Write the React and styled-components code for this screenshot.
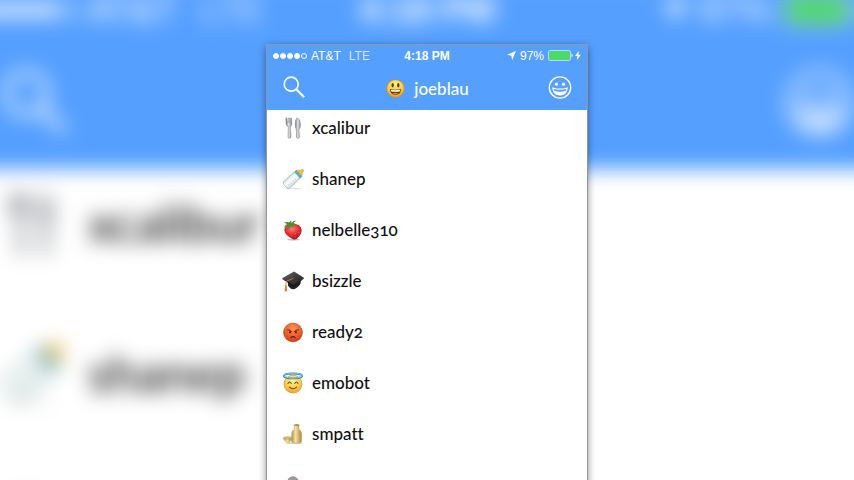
import React, { useId } from "react";
import styled, { createGlobalStyle, ThemeProvider } from "styled-components";

const GlobalStyle = createGlobalStyle`
  * { box-sizing: border-box; }
  body { margin: 0; background: #fff; }
`;

const phoneSizes = {
  screen: 320, status: 21, statusPad: 6, statusText: 12, statusGap: 4, carrierGap: 8,
  dot: 6, dotGap: 1, dotLine: 1, battery: 25, batteryHeight: 11, glyph: 9, bolt: 6, boltGap: 2,
  nav: 44, navPad: 15, navIcon: 24, title: 17, titleGap: 8, titleIcon: 21,
  listTop: 6, row: 23, rowGap: 28, rowPad: 15, icon: 22, iconGap: 8, name: 17,
};

const backdropSizes = {
  screen: 944, status: 59, statusPad: 18, statusText: 36, statusGap: 12, carrierGap: 24,
  dot: 18, dotGap: 3, dotLine: 3, battery: 74, batteryHeight: 32, glyph: 27, bolt: 18, boltGap: 6,
  nav: 130, navPad: 44, navIcon: 71, title: 50, titleGap: 24, titleIcon: 62,
  listTop: 20, row: 68, rowGap: 82, rowPad: 44, icon: 65, iconGap: 24, name: 50,
};

const s = (key) => ({ theme }) => `${theme[key]}px`;

const Stage = styled.main`
  position: relative;
  height: 100vh;
  overflow: hidden;
  padding-top: 45px;
  font-family: "Lato", "Open Sans", sans-serif;
`;

const Backdrop = styled.div`
  position: absolute;
  inset: 0;
  display: flex;
  justify-content: center;
  background: linear-gradient(#559fff 168px, #fff 168px);
  filter: blur(10px);
`;

const BackdropScreen = styled.div`
  flex: none;
  width: ${s("screen")};
  margin-top: -20px;
`;

const Phone = styled.section`
  position: relative;
  width: min(100%, ${s("screen")});
  margin: 0 auto;
  box-shadow: 0 0 0 1px #8e989f, 0 2px 8px rgba(0, 0, 0, 0.55);
`;

const Header = styled.header`
  background: #559fff;
  color: #fff;
`;

const StatusBar = styled.div`
  display: grid;
  grid-template-columns: 1fr auto 1fr;
  align-items: center;
  height: ${s("status")};
  padding: 0 ${s("statusPad")};
  font: ${s("statusText")} / 1 "Liberation Sans", Arial, sans-serif;
  white-space: nowrap;
`;

const StatusGroup = styled.div`
  display: flex;
  align-items: center;
  gap: ${s("statusGap")};
  justify-content: ${({ $end }) => ($end ? "flex-end" : "flex-start")};
`;

const Dots = styled.div`
  display: flex;
  gap: ${s("dotGap")};
`;

const Dot = styled.span`
  width: ${s("dot")};
  height: ${s("dot")};
  border: ${s("dotLine")} solid #fff;
  border-radius: 50%;
  background: ${({ $on }) => ($on ? "#fff" : "transparent")};
`;

const Network = styled.span`
  margin-left: ${({ theme }) => theme.carrierGap - theme.statusGap}px;
  opacity: 0.75;
`;

const Clock = styled.time`
  font-weight: 700;
`;

const StatusGlyph = styled.svg`
  flex: none;
  width: ${({ theme, $size }) => theme[$size]}px;
  height: ${({ theme, $tall }) => theme[$tall]}px;
`;

const PowerGroup = styled.div`
  display: flex;
  align-items: center;
  gap: ${s("boltGap")};
`;

const NavBar = styled.nav`
  display: flex;
  align-items: center;
  justify-content: space-between;
  height: ${s("nav")};
  padding: 0 ${s("navPad")};
`;

const IconButton = styled.button`
  display: block;
  padding: 0;
  border: 0;
  background: none;
  color: inherit;
  cursor: pointer;
  svg { display: block; width: ${s("navIcon")}; height: ${s("navIcon")}; }
`;

const Emoji = styled.svg`
  display: block;
  flex: none;
  width: ${s("icon")};
  height: ${s("icon")};
`;

const Title = styled.h1`
  display: flex;
  align-items: center;
  gap: ${s("titleGap")};
  margin: 0;
  font-size: ${s("title")};
  line-height: ${s("row")};
  font-weight: 500;
  ${Emoji} { width: ${s("titleIcon")}; height: ${s("titleIcon")}; }
`;

const FriendList = styled.ul`
  display: flex;
  flex-direction: column;
  gap: ${s("rowGap")};
  margin: 0;
  padding: ${s("listTop")} 0 0;
  list-style: none;
  background: #fff;
`;

const FriendButton = styled.button`
  display: flex;
  align-items: center;
  gap: ${s("iconGap")};
  width: 100%;
  height: ${s("row")};
  padding: 0 ${s("rowPad")};
  border: 0;
  background: none;
  color: #111;
  font: 500 ${s("name")} / 1 "Lato", "Open Sans", sans-serif;
  font-variant-numeric: oldstyle-nums;
  font-variant-ligatures: none;
  text-align: left;
  cursor: pointer;
`;

function Ball({ id, from, mid, to, edge, cy = 12, r = 10 }) {
  return (
    <>
      <radialGradient id={id} cx="50%" cy="28%" r="75%">
        <stop offset="0" stopColor={from} />
        <stop offset="0.55" stopColor={mid} />
        <stop offset="1" stopColor={to} />
      </radialGradient>
      <circle cx="12" cy={cy} r={r} fill={`url(#${id})`} stroke={edge} strokeWidth="0.7" />
    </>
  );
}

function Smiley() {
  const id = useId();
  return (
    <Emoji viewBox="0 0 24 24" aria-hidden="true">
      <Ball id={id} from="#fff07a" mid="#fbd03c" to="#ec9a1c" edge="#d48a22" />
      <ellipse cx="8.8" cy="8.3" rx="1.3" ry="2.5" fill="#57401e" />
      <ellipse cx="15.2" cy="8.3" rx="1.3" ry="2.5" fill="#57401e" />
      <path d="M5.6 12.5q6.4 1.6 12.8 0q-.5 6.7-6.4 6.7t-6.4-6.7z" fill="#6b3d12" />
      <path d="M6.6 13.5q5.4 1.1 10.8 0l-.5 1.9q-4.9.9-9.8 0z" fill="#fff" />
      <path d="M8.5 17.5q3.5-1.4 7 0q-3.5 2.2-7 0z" fill="#e08948" />
    </Emoji>
  );
}

function Cutlery() {
  const id = useId();
  return (
    <Emoji viewBox="0 0 24 24" aria-hidden="true">
      <linearGradient id={id}>
        <stop offset="0" stopColor="#777b81" />
        <stop offset="0.5" stopColor="#e5e7ea" />
        <stop offset="1" stopColor="#81858c" />
      </linearGradient>
      <g fill={`url(#${id})`} stroke="#7d8188" strokeWidth="0.6">
        <path d="M4.200 1.200q.6-.5 1 0l.5 5.200h.8l.2-5.200q.7-.5 1.300 0l.2 5.200h.8l.3-5.200q.6-.4 1.100 0l.2 6.400q0 2.100-1.600 2.900l.8 11q0 1.700-1.600 1.700t-1.600-1.700l.3-11Q4.600 9.700 4.500 7.600z" />
        <path d="M16.500 1q3.600 1.200 3.600 8l-.5 3.200-1.200.7.600 8.700q0 1.600-1.600 1.600t-1.600-1.600l.2-8.800-1.200-.6Q13.800 2.500 16.500 1z" />
      </g>
    </Emoji>
  );
}

function Bottle() {
  const id = useId();
  return (
    <Emoji viewBox="0 0 24 24" aria-hidden="true">
      <linearGradient id={id} x1="0" y1="0" x2="1" y2="0">
        <stop offset="0" stopColor="#d3e2e3" />
        <stop offset="0.4" stopColor="#fdfffe" />
        <stop offset="1" stopColor="#d2e1e1" />
      </linearGradient>
      <ellipse cx="12" cy="22.500" rx="8.500" ry="0.800" fill="#e2e2e2" />
      <g transform="rotate(48 12 12)">
        <rect x="7.200" y="5" width="9.600" height="18.500" rx="3" fill={`url(#${id})`} stroke="#94aaac" strokeWidth="0.7" />
        <path d="M15 10.500h-2m2 3h-2m2 3h-2m2 3h-2" stroke="#b4c4c5" strokeWidth="0.6" />
        <rect x="7.200" y="2.600" width="9.600" height="3" rx="1.200" fill="#53b2cf" stroke="#3b90aa" strokeWidth="0.5" />
        <path d="M8.200 2.600q.2-2.200 2.300-2.600V-2.300q1.500-1.500 3 0V0q2.100.4 2.300 2.600z" fill="#f7bd3b" stroke="#d39429" strokeWidth="0.5" />
      </g>
    </Emoji>
  );
}

function Strawberry() {
  const id = useId();
  return (
    <Emoji viewBox="0 0 24 24" aria-hidden="true">
      <radialGradient id={id} cx="45%" cy="30%" r="75%">
        <stop offset="0" stopColor="#ff7d6a" />
        <stop offset="0.5" stopColor="#e52f31" />
        <stop offset="1" stopColor="#a50d1c" />
      </radialGradient>
      <ellipse cx="12.500" cy="22.500" rx="7" ry="0.900" fill="#c4bebe" />
      <path d="M4 8.500q3.500-3.500 8-2 5.500-2.300 8.500 2.500 2.300 5-1.700 9.800-3 4.500-6.800 3.200Q3.200 18 2.500 12q0-2 1.500-3.500z" fill={`url(#${id})`} />
      <path d="M10.500 7.500q-2 1-3.500 3.500-.5-2-.2-3.300Q4.500 7.800 2.200 9.800 2.800 6.500 5.600 5.500 4 4.300 2 4.300q3-1.800 5.800-.5Q8.300 2.300 10 1.500q-.2 1.500.4 2.800Q12.700 1.500 15.500 2q-2.300 1.300-2.900 2.700 2.500.2 3.800 2.300-2.600-.7-4.600-.3.500 2-.4 4-.2-1.800-.9-3.200z" fill="#4c8f2d" />
      <g fill="#f8a36b">
        <circle cx="6.500" cy="14" r="0.500" /><circle cx="12" cy="13" r="0.500" />
        <circle cx="17" cy="10.500" r="0.500" /><circle cx="18.500" cy="14.500" r="0.500" />
        <circle cx="14.500" cy="16" r="0.500" /><circle cx="10" cy="17.500" r="0.500" />
        <circle cx="15" cy="19.500" r="0.500" />
      </g>
    </Emoji>
  );
}

function GraduationCap() {
  const id = useId();
  return (
    <Emoji viewBox="0 0 24 24" aria-hidden="true">
      <linearGradient id={id} x1="0" y1="0" x2="1" y2="1">
        <stop offset="0" stopColor="#666" />
        <stop offset="0.5" stopColor="#3d3d3d" />
        <stop offset="1" stopColor="#161616" />
      </linearGradient>
      <path d="M6.500 10v7q2.600 4.500 6.500 4 5.300-2 7.300-6.500V8.500z" fill="#222" />
      <path d="M.5 8.800 13.200 1.500 23.800 8.400 13 18z" fill={`url(#${id})`} />
      <path d="M.5 8.800 13 17l10.800-8.600v.8L13 18.500.5 9.700z" fill="#111" />
      <path d="M12.500 9 5 12.200l-1 5.500" fill="none" stroke="#d08a35" strokeWidth="0.9" />
      <path d="M3.400 16.500h1.700l.7 6.500q-1.800.9-3 .1z" fill="#dc9442" />
      <path d="M4.200 18v5" stroke="#a5641f" strokeWidth="0.5" />
    </Emoji>
  );
}

function AngryFace() {
  const id = useId();
  return (
    <Emoji viewBox="0 0 24 24" aria-hidden="true">
      <Ball id={id} from="#ff9557" mid="#f06027" to="#c93c16" edge="#b34a2a" cy={12.5} r={10.3} />
      <path d="M6 9.500q3.500.2 4.700 2.200M18 9.500q-3.500.2-4.700 2.200" fill="none" stroke="#652008" strokeWidth="1" strokeLinecap="round" />
      <ellipse cx="8.800" cy="12.300" rx="1" ry="1.300" fill="#541b08" />
      <ellipse cx="15.200" cy="12.300" rx="1" ry="1.300" fill="#541b08" />
      <path d="M9.500 18.300q2.500-2.600 5 0" fill="none" stroke="#651f07" strokeWidth="1.200" strokeLinecap="round" />
    </Emoji>
  );
}

function HaloFace() {
  const id = useId();
  return (
    <Emoji viewBox="0 0 24 24" aria-hidden="true">
      <Ball id={id} from="#fff593" mid="#fbd149" to="#eb9e26" edge="#d28e2a" cy={13.2} r={9.8} />
      <ellipse cx="12" cy="4.300" rx="10" ry="2.700" fill="none" stroke="#3486bd" strokeWidth="2" />
      <ellipse cx="12" cy="4" rx="10" ry="2.700" fill="none" stroke="#90d7f5" strokeWidth="0.9" />
      <path d="M6.500 12.500q1.800-3 3.600 0M13.900 12.500q1.800-3 3.600 0" fill="none" stroke="#74430d" strokeWidth="1.100" strokeLinecap="round" />
      <path d="M8 16.500q4 3.500 8 0" fill="none" stroke="#74430d" strokeWidth="1.100" strokeLinecap="round" />
    </Emoji>
  );
}

function Sake() {
  const id = useId();
  return (
    <Emoji viewBox="0 0 24 24" aria-hidden="true">
      <linearGradient id={id}>
        <stop offset="0" stopColor="#b89443" />
        <stop offset="0.4" stopColor="#f3e2a5" />
        <stop offset="1" stopColor="#ad8333" />
      </linearGradient>
      <ellipse cx="13" cy="22" rx="10" ry="1" fill="#d9d4c8" />
      <path d="M12.800 2q3.100-1.200 6.200 0l-.6 1.500v3.300q2.900 1.600 2.900 4.700V20q0 2.200-5.400 2.200t-5.400-2.200v-8.500q0-3.100 2.900-4.700V3.500z" fill={`url(#${id})`} stroke="#b28e46" strokeWidth="0.4" />
      <ellipse cx="15.900" cy="2.200" rx="2.700" ry="0.700" fill="#8b6b2b" />
      <path d="M1.500 16.300h9.600q0 3-2.700 4.500v1.200H4.200v-1.200q-2.700-1.500-2.700-4.500z" fill={`url(#${id})`} />
      <ellipse cx="6.300" cy="16.300" rx="4.800" ry="1.200" fill="#dfca86" stroke="#a8853d" strokeWidth="0.6" />
    </Emoji>
  );
}

function Koala() {
  const id = useId();
  return (
    <Emoji viewBox="0 0 24 24" aria-hidden="true">
      <Ball id={id} from="#a1989b" mid="#a1989b" to="#685f65" edge="#796f73" cx={10} cy={9} r={6} />
    </Emoji>
  );
}

const friends = [
  { name: "xcalibur", Icon: Cutlery },
  { name: "shanep", Icon: Bottle },
  { name: "nelbelle310", Icon: Strawberry },
  { name: "bsizzle", Icon: GraduationCap },
  { name: "ready2", Icon: AngryFace },
  { name: "emobot", Icon: HaloFace },
  { name: "smpatt", Icon: Sake },
  { name: "", Icon: Koala },
];

function Screen() {
  return (
    <>
      <Header>
        <StatusBar>
          <StatusGroup>
            <Dots>
              {[true, true, true, true, false].map((on, i) => <Dot key={i} $on={on} />)}
            </Dots>
            <span>AT&amp;T</span>
            <Network>LTE</Network>
          </StatusGroup>
          <Clock dateTime="16:18">4:18 PM</Clock>
          <StatusGroup $end>
            <StatusGlyph $size="glyph" $tall="glyph" viewBox="0 0 9 9" aria-hidden="true">
              <path d="M9 0 5.200 9 4.300 4.700 0 3.800z" fill="#fff" />
            </StatusGlyph>
            <span>97%</span>
            <PowerGroup>
              <StatusGlyph $size="battery" $tall="batteryHeight" viewBox="0 0 25 11" aria-hidden="true">
                <rect x="0.500" y="0.500" width="22" height="10" rx="1.500" fill="#4cd964" stroke="#b7d6ff" />
                <path d="M23.500 3.500q1.200.5 1.200 2t-1.200 2z" fill="#e5f0ff" />
              </StatusGlyph>
              <StatusGlyph $size="bolt" $tall="glyph" viewBox="0 0 6 9" aria-hidden="true">
                <path d="M3.800 0 0 5h2.400L1.700 9 6 3.700H3.400z" fill="#fff" />
              </StatusGlyph>
            </PowerGroup>
          </StatusGroup>
        </StatusBar>
        <NavBar>
          <IconButton type="button" aria-label="Search">
            <svg viewBox="0 0 24 24" fill="none" stroke="currentColor" strokeWidth="1.700">
              <circle cx="9.200" cy="8.200" r="7" />
              <path d="m14.200 13.200 8 8" strokeWidth="2" />
            </svg>
          </IconButton>
          <Title><Smiley /><span>joeblau</span></Title>
          <IconButton type="button" aria-label="Choose emoji">
            <svg viewBox="0 0 24 24">
              <circle cx="12" cy="11.500" r="10.700" fill="none" stroke="currentColor" strokeWidth="1.300" />
              <circle cx="8.500" cy="8.200" r="1.600" fill="currentColor" />
              <circle cx="15.500" cy="8.200" r="1.600" fill="currentColor" />
              <path d="M4.800 12q7.200 2.400 14.400 0-.8 7-7.200 7t-7.200-7z" fill="none" stroke="currentColor" strokeWidth="1.200" />
              <path d="M5.500 14.500q6.500 2.400 13 0-1.500 4.500-6.500 4.500t-6.500-4.500z" fill="currentColor" />
            </svg>
          </IconButton>
        </NavBar>
      </Header>
      <FriendList>
        {friends.map(({ name, Icon }, i) => (
          <li key={i}>
            <FriendButton type="button" aria-label={name || "Friend"}>
              <Icon />
              {name && <span>{name}</span>}
            </FriendButton>
          </li>
        ))}
      </FriendList>
    </>
  );
}

export default function App() {
  return (
    <Stage>
      <GlobalStyle />
      <ThemeProvider theme={backdropSizes}>
        <Backdrop aria-hidden="true" inert>
          <BackdropScreen><Screen /></BackdropScreen>
        </Backdrop>
      </ThemeProvider>
      <ThemeProvider theme={phoneSizes}>
        <Phone aria-label="Friends"><Screen /></Phone>
      </ThemeProvider>
    </Stage>
  );
}
